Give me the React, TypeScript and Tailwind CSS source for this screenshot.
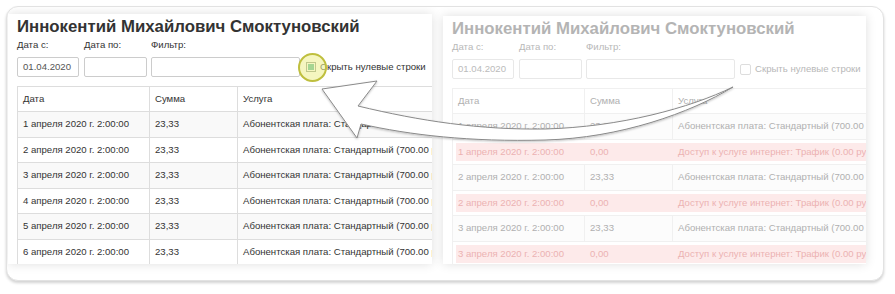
type Row = { date: string; sum: string; service: string; zero?: boolean };

const paid = "Абонентская плата: Стандартный (700.00 руб. в месяц)";
const traffic = "Доступ к услуге интернет: Трафик (0.00 руб. за Мб)";

const leftRows: Row[] = [1, 2, 3, 4, 5, 6].map((d) => ({
  date: `${d} апреля 2020 г. 2:00:00`,
  sum: "23,33",
  service: paid,
}));

const rightRows: Row[] = [1, 2, 3].flatMap((d) => [
  { date: `${d} апреля 2020 г. 2:00:00`, sum: "23,33", service: paid },
  { date: `${d} апреля 2020 г. 2:00:00`, sum: "0,00", service: traffic, zero: true },
]);

const Field = ({ label, value, className, faded }: { label: string; value?: string; className: string; faded?: boolean }) => (
  <div className={`${className} shrink-0`}>
    <div className={`text-[9.6px] leading-[13px] whitespace-nowrap ${faded ? "text-[#b8b8b8]" : "text-[#333]"}`}>{label}</div>
    <div
      className={`mt-[6px] h-[20px] rounded-[2px] border px-[5px] text-[9.6px] leading-[18px] ${
        faded ? "border-[#e8e8e8] text-[#bbb]" : "border-[#ccc] text-[#555]"
      }`}
    >
      {value}
    </div>
  </div>
);

const Panel = ({ rows, faded, className }: { rows: Row[]; faded?: boolean; className: string }) => {
  const line = faded ? "border-[#f0f0f0]" : "border-[#ddd]";
  const text = faded ? "text-[#b0b0b0]" : "text-[#333]";
  return (
    <div className={`${className} shrink-0 overflow-hidden bg-white pl-[9px] shadow-[0_0_10px_rgba(0,0,0,0.13)]`}>
      <h1 className={`mt-[2px] whitespace-nowrap text-[16.8px] font-bold leading-[21px] ${faded ? "text-[#b4b4b4]" : "text-[#333]"}`}>
        Иннокентий Михайлович Смоктуновский
      </h1>
      <div className="mt-[1px] flex items-end">
        <Field label="Дата с:" value="01.04.2020" className="w-[62px]" faded={faded} />
        <Field label="Дата по:" className="ml-[5px] w-[63px]" faded={faded} />
        <Field label="Фильтр:" className="ml-[4px] w-[149px]" faded={faded} />
        <div className="flex h-[20px] shrink-0 items-center whitespace-nowrap">
          {faded ? (
            <div className="ml-[5px] h-[11px] w-[11px] rounded-[2px] border border-[#ddd] bg-white" />
          ) : (
            <div className="ml-[6px] h-[10px] w-[10px] border border-[#8c9a8c] bg-white p-[1px]">
              <div className="h-full w-full bg-[#4fb59a]" />
            </div>
          )}
          <span className={`ml-[4px] text-[9.6px] ${faded ? "text-[#b8b8b8]" : "text-[#333]"}`}>Скрыть нулевые строки</span>
        </div>
      </div>
      <table className={`mt-[9px] w-[470px] table-fixed border-collapse border text-[9.6px] ${line} ${text}`}>
        <colgroup>
          <col className="w-[132px]" />
          <col className="w-[88px]" />
          <col />
        </colgroup>
        <thead>
          <tr className="h-[25px]">
            <th className={`border pl-[5px] text-left font-normal ${line}`}>Дата</th>
            <th className={`border pl-[5px] text-left font-normal ${line}`}>Сумма</th>
            <th className={`border pl-[5px] text-left font-normal ${line}`}>Услуга</th>
          </tr>
        </thead>
        <tbody>
          {rows.map((r, i) =>
            r.zero ? (
              <tr key={i} className="h-[25.5px]">
                <td colSpan={3} className={`border p-[3px] ${line}`}>
                  <div className="flex h-[18px] items-center overflow-hidden whitespace-nowrap bg-[#fdeaea] text-[#ecb2b2]">
                    <span className="w-[134px] shrink-0 pl-[2px]">{r.date}</span>
                    <span className="w-[88px] shrink-0">{r.sum}</span>
                    <span>{r.service}</span>
                  </div>
                </td>
              </tr>
            ) : (
              <tr key={i} className={`h-[25.5px] ${i % 2 === 0 ? (faded ? "bg-[#fcfcfc]" : "bg-[#f9f9f9]") : "bg-white"}`}>
                <td className={`overflow-hidden whitespace-nowrap border pl-[5px] ${line}`}>{r.date}</td>
                <td className={`overflow-hidden whitespace-nowrap border pl-[5px] ${line}`}>{r.sum}</td>
                <td className={`overflow-hidden whitespace-nowrap border pl-[5px] ${line}`}>{r.service}</td>
              </tr>
            )
          )}
        </tbody>
      </table>
    </div>
  );
};

const App = () => {
  return (
    <div className="relative h-[294px] w-[895px] overflow-hidden bg-white pl-[6px] pt-[6px] font-['Liberation_Sans',Arial,sans-serif]">
      <div className="flex h-[275px] w-[878px] items-start overflow-hidden rounded-[12px] border border-[#e2e2e2] bg-white shadow-[0_2px_3px_rgba(0,0,0,0.18)]">
        <Panel rows={leftRows} className="ml-[1px] mt-[7px] h-[250px] w-[424px]" />
        <Panel rows={rightRows} faded className="ml-[11px] mt-[9px] h-[248px] w-[423px]" />
      </div>

      {/* highlight ring over the checkbox */}
      <div className="absolute left-[298px] top-[53px] h-[29px] w-[29px] rounded-full border-2 border-[#bfbf3e] bg-[rgba(236,238,140,0.55)]" />

      {/* curved arrow */}
      <svg className="pointer-events-none absolute left-0 top-0" width="895" height="294" viewBox="0 0 895 294">
        <defs>
          <filter id="arrowShadow" x="-10%" y="-30%" width="120%" height="160%">
            <feDropShadow dx="0" dy="1" stdDeviation="1" floodColor="#000" floodOpacity="0.25" />
          </filter>
        </defs>
        <path
          d="M377 81 L358 106 C420 121 480 130 545 129 C620 127 690 108 733 87 C690 113 620 138 545 140 C470 142 410 135 361 124 L357 138 L322 89 Z"
          fill="#fff"
          stroke="#8a8a8a"
          strokeWidth="1"
          strokeLinejoin="round"
          filter="url(#arrowShadow)"
        />
      </svg>
    </div>
  );
};

export default App;
